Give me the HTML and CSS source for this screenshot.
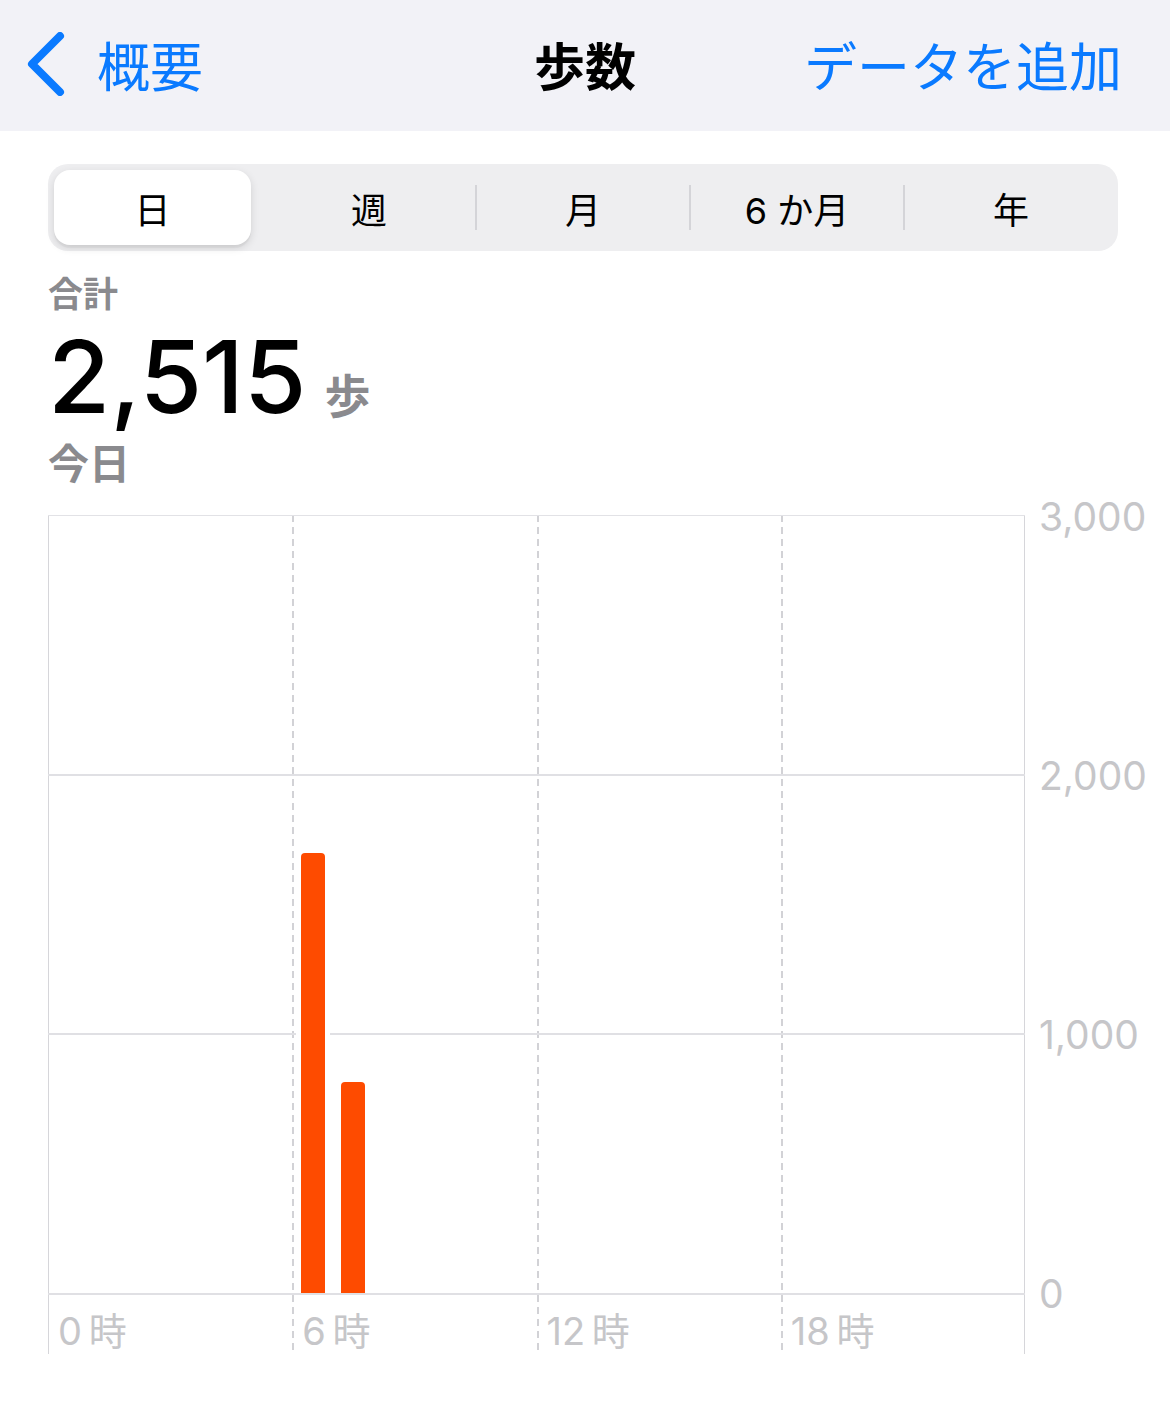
FILE: index.html
```html
<!DOCTYPE html>
<html lang="ja">
<head>
    <meta charset="UTF-8">
    <meta name="viewport" content="width=device-width, initial-scale=1.0">
    <title>歩数</title>
    <link rel="stylesheet" href="styles.css">
</head>
<body>
    <header class="nav-bar">
        <a class="nav-back" href="#">
            <svg class="chevron" viewBox="0 0 40 64" width="40" height="64">
                <polyline points="33,4 5,32 33,60" fill="none" stroke="#0a7aff" stroke-width="8" stroke-linecap="round" stroke-linejoin="round"/>
            </svg>
            <span>概要</span>
        </a>
        <h1 class="nav-title">歩数</h1>
        <a class="nav-action" href="#">データを追加</a>
    </header>

    <main class="content">
        <div class="segmented">
            <div class="segment selected"><span>日</span></div>
            <div class="segment"><span>週</span></div>
            <div class="segment"><span>月</span></div>
            <div class="segment"><span>6 か月</span></div>
            <div class="segment"><span>年</span></div>
        </div>

        <div class="summary">
            <div class="summary-label">合計</div>
            <div class="total">2,515<span class="unit">歩</span></div>
            <div class="summary-date">今日</div>
        </div>

        <div class="chart">
            <div class="plot">
                <div class="v-lines">
                    <div class="col first"></div>
                    <div class="col"></div>
                    <div class="col"></div>
                    <div class="col last"></div>
                </div>
                <div class="h-lines">
                    <div class="row"></div>
                    <div class="row"></div>
                    <div class="row"></div>
                </div>
                <div class="bars">
                    <!-- 1時間ごとの歩数 (最大 3,000) -->
                    <div class="bar" style="grid-column: 7; height: 56.63%"></div>
                    <div class="bar" style="grid-column: 8; height: 27.2%"></div>
                </div>
                <div class="x-labels">
                    <span>0 時</span>
                    <span>6 時</span>
                    <span>12 時</span>
                    <span>18 時</span>
                </div>
            </div>
            <div class="y-axis">
                <span>3,000</span>
                <span>2,000</span>
                <span>1,000</span>
                <span>0</span>
            </div>
        </div>
    </main>
</body>
</html>
```

FILE: styles.css
```css
body {
    margin: 0;
    background: #fff;
    color: #000;
    font-family: "Inter", "Noto Sans CJK JP", sans-serif;
}
a {
    text-decoration: none;
}

/* ナビゲーションバー */
.nav-bar {
    box-sizing: border-box;
    height: 131px;
    padding: 0 48px 4px 48px;
    background: #f2f2f7;
    display: grid;
    grid-template-columns: 1fr auto 1fr;
    align-items: center;
}
.nav-back {
    display: flex;
    align-items: center;
    color: #0a7aff;
    font-size: 53px;
}
.chevron {
    margin-left: -21px;
    margin-right: 30px;
}
.nav-title {
    margin: 0;
    font-size: 51px;
    font-weight: 700;
}
.nav-action {
    justify-self: end;
    color: #0a7aff;
    font-size: 53px;
}

.content {
    padding: 33px 52px 0 48px;
}

/* セグメント */
.segmented {
    display: grid;
    grid-template-columns: repeat(5, 1fr);
    height: 87px;
    background: #eeeef0;
    border-radius: 20px;
}
.segment {
    position: relative;
    display: flex;
    align-items: center;
    justify-content: center;
    font-size: 36px;
}
.segment:nth-child(n+3)::before {
    content: "";
    position: absolute;
    left: -1px;
    top: 21px;
    bottom: 21px;
    width: 2px;
    background: #d4d4d8;
}
.segment.selected {
    margin: 6px 11px 6px 6px;
    background: #fff;
    border-radius: 16px;
    box-shadow: 0 3px 8px rgba(0, 0, 0, 0.12), 0 3px 1px rgba(0, 0, 0, 0.04);
}

/* 合計 */
.summary {
    padding-top: 23px;
}
.summary-label {
    font-size: 35px;
    line-height: 40px;
    font-weight: 700;
    color: #8a8a8e;
}
.total {
    margin-top: 12px;
    font-size: 101px;
    line-height: 100px;
    font-weight: 500;
}
.unit {
    margin-left: 18px;
    font-size: 46px;
    font-weight: 700;
    color: #8a8a8e;
}
.summary-date {
    margin-top: -6px;
    font-size: 41px;
    line-height: 48px;
    font-weight: 700;
    color: #8a8a8e;
}

/* グラフ */
.chart {
    margin-top: 27px;
    margin-right: -52px;
    display: flex;
}
.plot {
    flex: 0 0 977px;
    height: 839px;
    display: grid;
    grid-template-columns: 100%;
    grid-template-rows: 780px 59px;
}
.v-lines,
.h-lines,
.bars {
    grid-area: 1 / 1 / 2 / 2;
}
.v-lines {
    grid-row: 1 / 3;
    display: grid;
    grid-template-columns: repeat(4, 1fr);
}
.col {
    background: repeating-linear-gradient(#d2d2d6 0 7px, transparent 7px 12px) left top / 2px 100% no-repeat;
}
.col.first {
    background: none;
    border-left: 1px solid #d6d6da;
}
.col.last {
    border-right: 1px solid #d6d6da;
}
.h-lines {
    display: flex;
    flex-direction: column;
    border-top: 1px solid #e2e2e6;
}
.row {
    flex: 1;
    border-bottom: 2px solid #e0e0e4;
}
.bars {
    height: 777px;
    margin-top: 1px;
    overflow: hidden;
    display: grid;
    grid-template-columns: repeat(24, 1fr);
    align-items: end;
}
.bar {
    justify-self: center;
    width: 24px;
    background: #fe4b00;
    border-radius: 4px 4px 0 0;
    box-shadow: 0 0 0 5px #fff;
}
.x-labels {
    grid-area: 2 / 1 / 3 / 2;
    display: grid;
    grid-template-columns: repeat(4, 1fr);
    align-items: center;
    font-size: 38px;
    word-spacing: -4px;
    color: #c6c6c9;
}
.x-labels span {
    padding-left: 10px;
    padding-top: 6px;
}
.y-axis {
    height: 779px;
    padding-left: 14px;
    display: flex;
    flex-direction: column;
    justify-content: space-between;
    font-size: 39px;
    color: #c6c6c9;
}
.y-axis span {
    height: 0;
    line-height: 0;
    padding-top: 2px;
}
```
